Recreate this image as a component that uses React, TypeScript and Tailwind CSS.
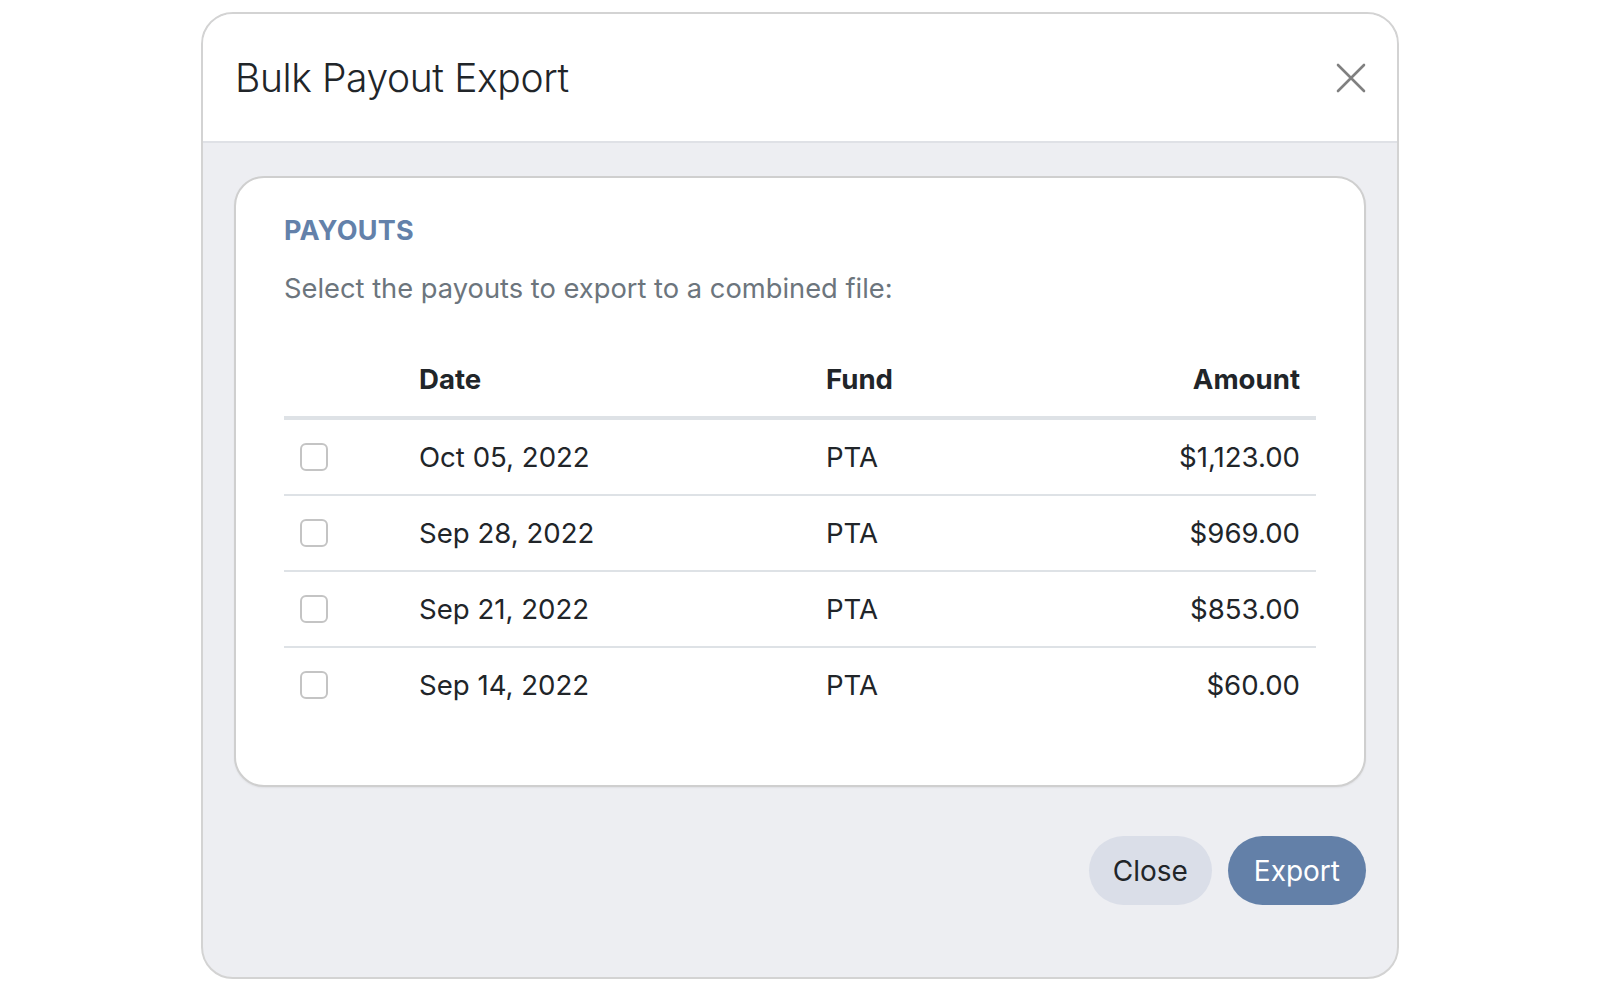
import React from 'react';

interface Payout {
  date: string;
  fund: string;
  amount: string;
}

const payouts: Payout[] = [
  { date: 'Oct 05, 2022', fund: 'PTA', amount: '$1,123.00' },
  { date: 'Sep 28, 2022', fund: 'PTA', amount: '$969.00' },
  { date: 'Sep 21, 2022', fund: 'PTA', amount: '$853.00' },
  { date: 'Sep 14, 2022', fund: 'PTA', amount: '$60.00' },
];

function CloseIcon() {
  return (
    <svg width="30" height="30" viewBox="0 0 30 30" fill="none" stroke="#808080" strokeWidth={2.6} strokeLinecap="round">
      <path d="M2 2L28 28M28 2L2 28" />
    </svg>
  );
}

export default function App() {
  return (
    <div className="min-h-screen bg-white pt-[12px] font-['Inter','Noto_Sans',sans-serif] text-[#212529]">
      <div className="mx-auto w-[1198px] overflow-hidden rounded-[32px] border-2 border-[#d3d3d3] bg-[#edeef2]">
        {/* header */}
        <div className="flex h-[129px] items-center justify-between border-b-2 border-[#dfe1e6] bg-white pl-[32px] pr-[31px]">
          <h1 className="text-[39px] font-light leading-none tracking-[-0.01em] text-[#212529]">Bulk Payout Export</h1>
          <button type="button" aria-label="Close" className="flex h-[30px] w-[30px] items-center justify-center">
            <CloseIcon />
          </button>
        </div>

        {/* body */}
        <div className="px-[31px] pt-[33px]">
          <div className="rounded-[30px] border-2 border-[#cfcfcf] bg-white px-[48px] pt-[37px] pb-[63px] shadow-[0_1px_2px_rgba(0,0,0,0.06)]">
            <h2 className="text-[27px] font-bold leading-[32px] tracking-[0.01em] text-[#6381aa]">PAYOUTS</h2>
            <p className="mt-[22px] text-[27.3px] leading-[39px] text-[#6c757d]">
              Select the payouts to export to a combined file:
            </p>

            <table className="mt-[34px] w-full table-fixed border-collapse text-[27.6px] leading-[42px]">
              <thead>
                <tr className="border-b-4 border-[#dee2e6]">
                  <th className="w-[119px] py-4" />
                  <th className="w-[407px] px-4 py-4 text-left font-bold">Date</th>
                  <th className="px-4 py-4 text-left font-bold">Fund</th>
                  <th className="px-4 py-4 text-right font-bold">Amount</th>
                </tr>
              </thead>
              <tbody>
                {payouts.map((p, i) => (
                  <tr key={p.date} className={i < payouts.length - 1 ? 'border-b-2 border-[#dee2e6]' : ''}>
                    <td className="py-4 pl-4">
                      <span className="block h-[28px] w-[28px] rounded-[6px] border-2 border-[#c4c4c4] bg-white" />
                    </td>
                    <td className="px-4 py-4">{p.date}</td>
                    <td className="px-4 py-4">{p.fund}</td>
                    <td className="px-4 py-4 text-right">{p.amount}</td>
                  </tr>
                ))}
              </tbody>
            </table>
          </div>
        </div>

        {/* footer */}
        <div className="flex justify-end gap-4 px-[31px] pt-[49px] pb-[72px]">
          <button type="button" className="h-[69px] rounded-full bg-[#dadee8] px-[24px] text-[28px] text-[#212529]">
            Close
          </button>
          <button type="button" className="h-[69px] rounded-full bg-[#6380a8] px-[26px] text-[28px] text-white">
            Export
          </button>
        </div>
      </div>
    </div>
  );
}
